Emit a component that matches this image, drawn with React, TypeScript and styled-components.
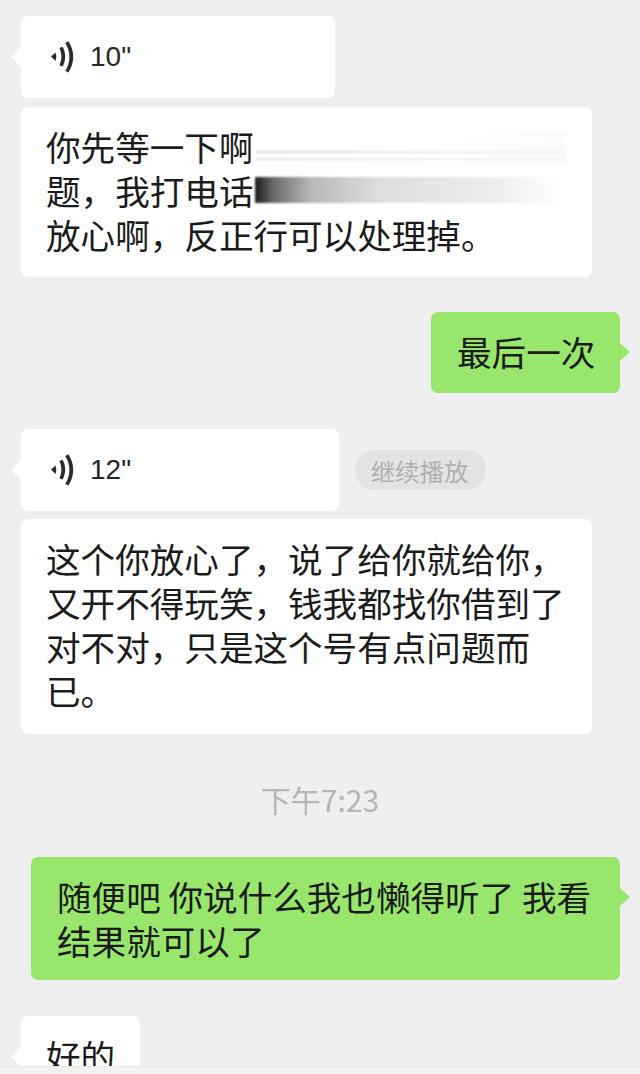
import * as React from "react";
import styled, { createGlobalStyle } from "styled-components";

const GlobalStyle = createGlobalStyle`
  html, body {
    margin: 0;
    padding: 0;
    background: #efefef;
  }
  body {
    font-family: "Noto Sans CJK SC", "Liberation Sans", sans-serif;
  }
`;

const VoiceIcon = () => (
  <svg width="24" height="32" viewBox="0 0 24 32" fill="#2b2b2b">
    <path d="M1 15.6 L5.6 11.4 Q7 15.6 5.6 20 Z" />
    <path d="M9.4 7 L12.6 5.8 C16 11.6 16 19.6 12.6 25.6 L9.4 24.2 C12 19 12 12.4 9.4 7 Z" />
    <path d="M15.2 2 L18.4 0.2 C24.8 9.6 24.8 21.8 18.4 31.6 L15.2 29.8 C20.8 21.4 20.8 10.4 15.2 2 Z" />
  </svg>
);

const Chat = () => (
  <Page>
    <Messages>
      <Row $top={16}>
        <Bubble $width={314} $height={82}>
          <VoiceBody>
            <VoiceIcon />
            <Duration>10"</Duration>
          </VoiceBody>
        </Bubble>
      </Row>
      <Row $top={9}>
        <TextBubble $width={571} $height={170}>
          <Line>你先等一下啊<FaintSmear /></Line>
          <Line>题，我打电话<DarkSmear /></Line>
          <Line>放心啊，反正行可以处理掉。</Line>
        </TextBubble>
      </Row>
      <Row $top={35} $right>
        <SentBubble $width={189} $height={81}>
          <Line>最后一次</Line>
        </SentBubble>
      </Row>
      <Row $top={36}>
        <Bubble $width={318} $height={82}>
          <VoiceBody>
            <VoiceIcon />
            <Duration>12"</Duration>
          </VoiceBody>
        </Bubble>
        <ResumePill>继续播放</ResumePill>
      </Row>
      <Row $top={8}>
        <TextBubble $width={571} $height={215}>
          <Line>这个你放心了，说了给你就给你，</Line>
          <Line>又开不得玩笑，钱我都找你借到了</Line>
          <Line>对不对，只是这个号有点问题而</Line>
          <Line>已。</Line>
        </TextBubble>
      </Row>
      <TimeLabel>下午7:23</TimeLabel>
      <Row $top={38} $right>
        <SentBubble $width={589} $height={123}>
          <Line>随便吧 你说什么我也懒得听了 我看</Line>
          <Line>结果就可以了</Line>
        </SentBubble>
      </Row>
      <Row $top={36}>
        <TextBubble $width={119} $height={90}>
          <Line>好的</Line>
        </TextBubble>
      </Row>
    </Messages>
    <BottomStrip />
  </Page>
);

const Page = styled.div`
  width: 640px;
  height: 1074px;
  overflow: hidden;
  background: #efefef;
  display: flex;
  flex-direction: column;
`;

const Messages = styled.div`
  height: 1066px;
  overflow: hidden;
  display: flex;
  flex-direction: column;
  flex: none;
`;

const BottomStrip = styled.div`
  height: 8px;
  flex: none;
  background: #f2f2f2;
  border-top: 1px solid #e8e8e8;
  box-sizing: border-box;
`;

const Row = styled.div<{ $top: number; $right?: boolean }>`
  display: flex;
  flex: none;
  align-items: center;
  justify-content: ${p => (p.$right ? "flex-end" : "flex-start")};
  margin-top: ${p => p.$top}px;
  padding: ${p => (p.$right ? "0 20px 0 0" : "0 0 0 21px")};
`;

const Bubble = styled.div<{ $width: number; $height: number }>`
  position: relative;
  box-sizing: border-box;
  flex: none;
  width: ${p => p.$width}px;
  height: ${p => p.$height}px;
  background: #ffffff;
  border-radius: 7px;

  &::before {
    content: "";
    position: absolute;
    left: -10px;
    top: 31px;
    border-style: solid;
    border-width: 10px 10px 10px 0;
    border-color: transparent #ffffff transparent transparent;
  }
`;

const TextBubble = styled(Bubble)`
  padding: 17px 25px 0;

  &::before {
    display: ${p => (p.$width < 200 ? "block" : "none")};
  }
`;

const SentBubble = styled.div<{ $width: number; $height: number }>`
  position: relative;
  box-sizing: border-box;
  flex: none;
  width: ${p => p.$width}px;
  height: ${p => p.$height}px;
  padding: 17px 26px 0;
  background: #98e76c;
  border-radius: 7px;

  &::after {
    content: "";
    position: absolute;
    right: -10px;
    top: 31px;
    border-style: solid;
    border-width: 9px 0 9px 10px;
    border-color: transparent transparent transparent #98e76c;
  }
`;

const VoiceBody = styled.div`
  display: flex;
  align-items: center;
  height: 100%;
  padding-left: 29px;
  gap: 16px;
`;

const Duration = styled.span`
  font-family: "Liberation Sans", sans-serif;
  font-size: 28px;
  color: #262626;
`;

const Line = styled.div`
  display: flex;
  align-items: center;
  height: 44px;
  font-size: 34.6px;
  line-height: 44px;
  color: #1b1b1b;
  white-space: pre;
`;

const FaintSmear = styled.span`
  display: block;
  flex: none;
  width: 310px;
  height: 32px;
  margin: 4px 0 0 3px;
  background:
    linear-gradient(90deg, #d6d6d6, #ececec 60%, #f4f4f4) 0 19px / 100% 2px no-repeat,
    linear-gradient(90deg, #dedede, #f0f0f0 60%, #f2f2f2) 0 26px / 100% 2px no-repeat,
    linear-gradient(90deg, #ffffff, #ffffff 65%, #fbfbfb);
  filter: blur(1px);
`;

const DarkSmear = styled.span`
  display: block;
  flex: none;
  width: 309px;
  height: 26px;
  margin: 0 0 0 2px;
  background: linear-gradient(90deg, #1c1c1c, #6a6a6a 6%, #b8b8b8 18%, #dedede 40%, #ececec 75%, #ffffff);
  filter: blur(1px);
`;

const ResumePill = styled.div`
  flex: none;
  display: flex;
  align-items: center;
  justify-content: center;
  box-sizing: border-box;
  width: 131px;
  height: 40px;
  margin-left: 16px;
  padding-right: 2px;
  border-radius: 20px;
  background: #e3e3e3;
  color: #b0b0b0;
  font-size: 24.4px;
`;

const TimeLabel = styled.div`
  flex: none;
  margin-top: 45px;
  height: 40px;
  line-height: 40px;
  text-align: center;
  font-size: 30px;
  color: #b5b5b5;
`;

export default function App() {
  return (
    <>
      <GlobalStyle />
      <Chat />
    </>
  );
}
